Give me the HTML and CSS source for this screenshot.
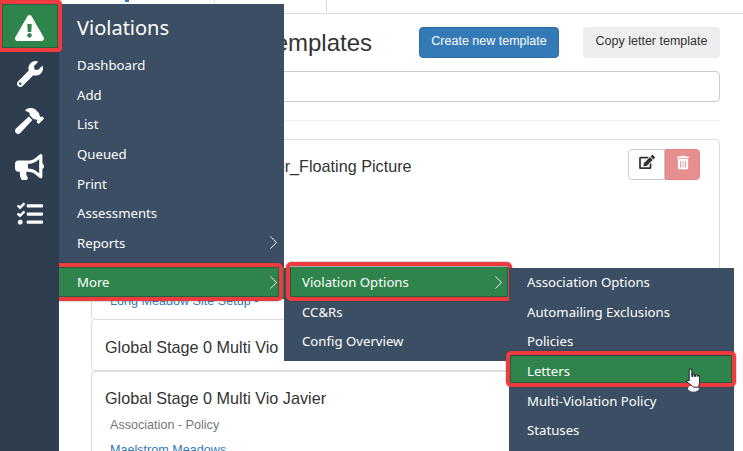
FILE: index.html
```html
<!DOCTYPE html>
<html lang="en">
<head>
<meta charset="utf-8">
<title>Violation letter templates</title>
<link rel="stylesheet" href="styles.css">
</head>
<body>
<div class="app">
  <nav class="rail">
    <a class="rail-item rail-active"><svg class="ico-tri" viewBox="0 0 576 512"><path d="M569.517 440.013C587.975 472.007 564.806 512 527.94 512H48.054c-36.937 0-59.999-40.055-41.577-71.987L246.423 23.985c18.467-32.009 64.72-31.951 83.154 0l239.94 416.028zM288 354c-25.405 0-46 20.595-46 46s20.595 46 46 46 46-20.595 46-46-20.595-46-46-46zm-43.673-165.346l7.418 136c.347 6.364 5.609 11.346 11.982 11.346h48.546c6.373 0 11.635-4.982 11.982-11.346l7.418-136c.375-6.874-5.098-12.654-11.982-12.654h-63.383c-6.884 0-12.356 5.78-11.981 12.654z"/></svg></a>
    <a class="rail-item"><svg class="ico-wrench" viewBox="0 0 512 512"><path d="M507.73 109.1c-2.24-9.03-13.54-12.09-20.12-5.51l-74.36 74.36-67.88-11.31-11.31-67.88 74.36-74.36c6.62-6.62 3.43-17.9-5.66-20.16-47.38-11.74-99.55.91-136.58 37.93-39.64 39.64-50.55 97.1-34.05 147.2L18.74 402.76c-24.99 24.99-24.99 65.51 0 90.5 24.99 24.99 65.51 24.99 90.5 0l213.21-213.21c50.12 16.71 107.47 5.68 147.37-34.22 37.07-37.07 49.7-89.32 37.91-136.73zM64 472c-13.25 0-24-10.75-24-24 0-13.26 10.75-24 24-24s24 10.74 24 24c0 13.25-10.75 24-24 24z"/></svg></a>
    <a class="rail-item"><svg class="ico-wide" viewBox="0 0 576 512"><path d="M571.31 193.94l-22.63-22.63c-6.25-6.25-16.38-6.25-22.63 0l-11.31 11.31-28.9-28.9c5.63-21.31.36-44.9-16.35-61.61l-45.25-45.25c-62.48-62.48-163.79-62.48-226.28 0l90.51 45.25v18.75c0 16.97 6.74 33.25 18.75 45.25l49.14 49.14c16.71 16.71 40.3 21.98 61.61 16.35l28.9 28.9-11.31 11.31c-6.25 6.25-6.25 16.38 0 22.63l22.63 22.63c6.25 6.25 16.38 6.25 22.63 0l90.51-90.51c6.23-6.25 6.23-16.38-.02-22.63zm-286.72-15.2c-3.7-3.7-6.84-7.79-9.85-11.95L19.64 404.96c-25.57 23.88-26.26 64.19-1.53 88.93s65.05 24.05 88.93-1.53l238.13-255.07c-3.96-2.91-7.9-5.87-11.44-9.41l-49.14-49.14z"/></svg></a>
    <a class="rail-item"><svg class="ico-wide" viewBox="0 0 576 512"><path d="M576 240c0-23.63-12.95-44.04-32-55.12V32.01C544 23.26 537.02 0 512 0c-7.12 0-14.19 2.38-19.98 7.02l-85.03 68.03C364.28 109.19 310.66 128 256 128H64c-35.35 0-64 28.65-64 64v96c0 35.35 28.65 64 64 64h33.7c-1.39 10.48-2.18 21.14-2.18 32 0 39.77 9.26 77.35 25.56 110.94 5.19 10.69 16.52 17.06 28.4 17.06h74.28c26.05 0 41.69-29.84 25.9-50.56-16.4-21.52-26.15-48.36-26.15-77.44 0-11.11 1.62-21.79 4.41-32H256c54.66 0 108.28 18.81 150.98 52.95l85.03 68.03a32.023 32.023 0 0 0 19.98 7.02c24.92 0 32-22.78 32-32V295.13C563.05 284.04 576 263.63 576 240zm-96 141.42l-33.05-26.44C392.95 311.78 325.12 288 256 288v-96c69.12 0 136.95-23.78 190.95-66.98L480 98.58v282.84z"/></svg></a>
    <a class="rail-item"><svg class="ico-wrench" viewBox="0 0 512 512"><path d="M139.61 35.5a12 12 0 0 0-17 0L58.93 98.81l-22.7-22.12a12 12 0 0 0-17 0L3.53 92.41a12 12 0 0 0 0 17l47.59 47.4a12.78 12.78 0 0 0 17.61 0l15.59-15.62L156.52 69a12.09 12.09 0 0 0 .09-17zm0 159.19a12 12 0 0 0-17 0l-63.68 63.72-22.7-22.1a12 12 0 0 0-17 0L3.53 252a12 12 0 0 0 0 17L51 316.5a12.77 12.77 0 0 0 17.6 0l15.7-15.69 72.2-72.22a12 12 0 0 0 .09-16.9zM64 368c-26.49 0-48.59 21.5-48.59 48S37.53 464 64 464a48 48 0 0 0 0-96zm432 16H208a16 16 0 0 0-16 16v32a16 16 0 0 0 16 16h288a16 16 0 0 0 16-16v-32a16 16 0 0 0-16-16zm0-320H208a16 16 0 0 0-16 16v32a16 16 0 0 0 16 16h288a16 16 0 0 0 16-16V80a16 16 0 0 0-16-16zm0 160H208a16 16 0 0 0-16 16v32a16 16 0 0 0 16 16h288a16 16 0 0 0 16-16v-32a16 16 0 0 0-16-16z"/></svg></a>
  </nav>

  <main class="main">
    <div class="tabs">
      <div class="tab tab-first"><span class="tab-mark"></span></div>
      <div class="tab tab-second"></div>
    </div>
    <div class="content">
      <header class="head">
        <h1 class="head-title">Violations: letter templates</h1>
        <div class="head-actions">
          <button class="btn btn-primary">Create new template</button>
          <button class="btn btn-plain">Copy letter template</button>
        </div>
      </header>
      <input class="search" type="text">
      <hr class="rule">
      <section class="card card-first">
        <div class="card-top">
          <h2 class="card-title">Global Stage 0 Vio_Letter_Floating Picture</h2>
          <div class="card-actions">
            <button class="act act-edit"><svg class="act-ico" viewBox="0 0 576 512"><path d="M402.6 83.2l90.2 90.2c3.8 3.8 3.8 10 0 13.8L274.4 405.6l-92.8 10.3c-12.4 1.4-22.9-9.1-21.5-21.5l10.3-92.8L388.8 83.2c3.8-3.8 10-3.8 13.8 0zm162-22.9l-48.8-48.8c-15.2-15.2-39.9-15.2-55.2 0l-35.4 35.4c-3.8 3.8-3.8 10 0 13.8l90.2 90.2c3.8 3.8 10 3.8 13.8 0l35.4-35.4c15.2-15.3 15.2-40 0-55.2zM384 346.2V448H64V128h229.8c3.2 0 6.2-1.3 8.5-3.5l40-40c7.6-7.6 2.2-20.5-8.5-20.5H48C21.5 64 0 85.5 0 112v352c0 26.5 21.5 48 48 48h352c26.5 0 48-21.5 48-48V306.2c0-10.7-12.9-16-20.5-8.5l-40 40c-2.2 2.3-3.5 5.3-3.5 8.5z"/></svg></button>
            <button class="act act-del"><svg class="act-ico" viewBox="0 0 448 512"><path d="M32 464a48 48 0 0 0 48 48h288a48 48 0 0 0 48-48V128H32zm272-256a16 16 0 0 1 32 0v224a16 16 0 0 1-32 0zm-96 0a16 16 0 0 1 32 0v224a16 16 0 0 1-32 0zm-96 0a16 16 0 0 1 32 0v224a16 16 0 0 1-32 0zM432 32H312l-9.4-18.7A24 24 0 0 0 281.1 0H166.8a23.72 23.72 0 0 0-21.4 13.3L136 32H16A16 16 0 0 0 0 48v32a16 16 0 0 0 16 16h416a16 16 0 0 0 16-16V48a16 16 0 0 0-16-16z"/></svg></button>
          </div>
        </div>
        <a class="card-link card-link-end">Long Meadow Site Setup -</a>
      </section>
      <section class="card card-second">
        <h2 class="card-title">Global Stage 0 Multi Vio</h2>
      </section>
      <section class="card card-third">
        <h2 class="card-title">Global Stage 0 Multi Vio Javier</h2>
        <p class="card-sub">Association - Policy</p>
        <a class="card-link">Maelstrom Meadows</a>
      </section>
    </div>
  </main>
</div>

<div class="menu menu-one">
  <div class="menu-title">Violations</div>
  <a class="menu-row">Dashboard</a>
  <a class="menu-row">Add</a>
  <a class="menu-row">List</a>
  <a class="menu-row">Queued</a>
  <a class="menu-row">Print</a>
  <a class="menu-row">Assessments</a>
  <a class="menu-row">Reports<svg class="chev" viewBox="0 0 7 13"><path d="M.5.5l6 6-6 6"/></svg></a>
  <a class="menu-row row-on row-more">More<svg class="chev" viewBox="0 0 7 13"><path d="M.5.5l6 6-6 6"/></svg></a>
</div>
<div class="menu menu-two">
  <a class="menu-row row-on row-options">Violation Options<svg class="chev" viewBox="0 0 7 13"><path d="M.5.5l6 6-6 6"/></svg></a>
  <a class="menu-row">CC&amp;Rs</a>
  <a class="menu-row">Config Overview</a>
</div>
<div class="menu menu-three">
  <a class="menu-row">Association Options</a>
  <a class="menu-row">Automailing Exclusions</a>
  <a class="menu-row">Policies</a>
  <a class="menu-row row-on row-letters">Letters<svg class="hand" viewBox="0 0 14 24"><ellipse cx="7.5" cy="20.5" rx="5.5" ry="3.2" fill="#fff"/><path d="M.8 12.5h2.4V1.2h2.6V8.5h1V6.2h1.8v2.3h.9V6.8h1.8v1.7h.7V7.6h1.6v6.6l-1 5H8c-.8 0-1-.5-1.5-1L3 15.5.8 14z" fill="#fff" stroke="#1d2329" stroke-width="1"/></svg></a>
  <a class="menu-row">Multi-Violation Policy</a>
  <a class="menu-row">Statuses</a>
</div>
</body>
</html>
```
FILE: styles.css
```css
* { box-sizing: border-box; }
html, body { margin: 0; height: 451px; overflow: hidden; background: #fff; }
body { font-family: "Liberation Sans", Arial, sans-serif; color: #333; }

.app { display: flex; height: 451px; }

/* icon rail */
.rail { width: 59px; flex: none; background: #2f3e4e; display: flex; flex-direction: column; position: relative; z-index: 3; }
.rail-item { height: 46.5px; display: flex; align-items: center; justify-content: center; }
.rail-item svg { fill: #fff; display: block; }
.rail-active { height: 51px; padding-top: 5px; background: #2e844a; position: relative; }
.rail-active::after { content: ""; position: absolute; left: 0; top: 0; right: -3px; bottom: -1px; border: 4px solid #ee3b3e; border-left-width: 2px; border-radius: 0 4px 4px 0; box-shadow: inset 0 0 0 1px rgba(20,40,50,.35); }
.ico-tri { width: 29px; height: 26px; }
.ico-wrench { width: 26px; height: 26px; }
.ico-wide { width: 29px; height: 26px; }

/* page behind the menus */
.main { flex: 1; min-width: 0; }
.tabs { height: 14px; border-bottom: 1px solid #ddd; display: flex; }
.tab { height: 13px; border-right: 1px solid #ddd; }
.tab-first { width: 156px; padding-left: 66px; }
.tab-second { width: 112px; }
.tab-mark { display: block; width: 4px; height: 2px; background: #337ab7; }

.content { margin-left: 32px; width: 629px; padding-top: 13px; }
.head { display: flex; align-items: flex-start; height: 31px; }
.head-title { margin: 0; font-size: 24px; font-weight: 400; line-height: 32px; white-space: nowrap; }
.head-actions { margin-left: auto; display: flex; gap: 24px; }
.btn { height: 31px; padding: 0 0 4px; border: 1px solid transparent; border-radius: 4px; font: 12.5px "Liberation Sans", Arial, sans-serif; }
.btn-primary { width: 140px; background: #337ab7; border-color: #2e6da4; color: #fff; }
.btn-plain { width: 137px; background: #eee; color: #333; }
.search { display: block; width: 100%; height: 31px; margin-top: 13px; border: 1px solid #ccc; border-radius: 4px; background: #fff; }
.rule { margin: 18px 0; border: 0; border-top: 1px solid #eee; }

.card { border: 1px solid #ddd; border-radius: 4px; padding: 0 13px; background: #fff; }
.card-first { height: 181px; padding-top: 9px; position: relative; display: flex; flex-direction: column; }
.card-top { display: flex; justify-content: space-between; padding-right: 6px; }
.card-title { margin: 0; font-size: 16.2px; font-weight: 400; line-height: 20px; color: #333; white-space: nowrap; }
.card-first .card-title { padding-top: 7px; }
.card-actions { display: flex; }
.act { height: 31px; padding: 0; display: flex; align-items: flex-start; justify-content: center; border: 1px solid #ccc; }
.act-edit { width: 37px; background: #fff; border-radius: 4px 0 0 4px; padding-top: 5px; }
.act-del { width: 35px; background: #e78e8e; border-color: #e58383; border-radius: 0 4px 4px 0; padding-top: 5px; }
.act-ico { height: 14px; display: block; }
.act-edit .act-ico { width: 16px; fill: #333; }
.act-del .act-ico { width: 12px; fill: #fff; height: 15px; }
.card-link { color: #337ab7; font-size: 12.6px; line-height: 16px; padding-left: 5px; display: block; white-space: nowrap; }
.card-link-end { margin-top: auto; padding-bottom: 10px; }
.card-second { height: 52px; margin-top: -1px; padding-top: 17px; }
.card-third { height: 120px; padding-top: 16px; }
.card-sub { margin: 9px 0 0; padding-left: 5px; font-size: 12.6px; line-height: 16px; color: #777; }
.card-third .card-link { margin-top: 9px; }

/* fly-out menus */
.menu { position: absolute; width: 225px; background: #3b4e63; color: #fff; font-family: "Noto Sans", sans-serif; font-size: 13.2px; z-index: 2; }
.menu-one { left: 59px; top: 4px; height: 295px; }
.menu-two { left: 284px; top: 268px; height: 93px; }
.menu-three { left: 509px; top: 268px; height: 183px; }
.menu-two .menu-row:first-child, .menu-three .menu-row:first-child { margin-top: -.6px; }
.menu-title { height: 46.4px; padding-left: 18px; font-size: 20px; line-height: 48px; }
.menu-row { display: flex; align-items: center; justify-content: space-between; height: 29.6px; padding: 0 7px 0 18px; position: relative; white-space: nowrap; }
.row-on { background: #2e844a; }
.row-on::after { content: ""; position: absolute; left: -3px; right: -2px; top: -5px; bottom: -1px; border: 4px solid #ee3b3e; border-radius: 5px; box-shadow: inset 0 0 0 1px rgba(20,40,50,.4), 0 0 0 1px rgba(20,40,50,.15); pointer-events: none; }
.row-more { margin-top: 9px; height: 31px; }
.row-more::after { left: -5px; right: 1px; top: -4px; bottom: -3px; }
.menu-two .row-options { margin-left: 6px; padding-left: 12px; }
.row-options::after { left: -4px; right: -3px; top: -5px; bottom: -4px; }
.chev { width: 7px; height: 13px; fill: none; stroke: #fff; stroke-width: 1; display: block; }
.hand { position: absolute; left: 177px; top: 12px; width: 14px; height: 24px; z-index: 1; }
```
